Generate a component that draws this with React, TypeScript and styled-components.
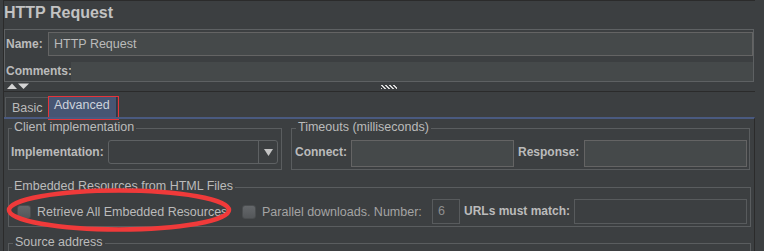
import React from 'react';
import styled, { createGlobalStyle } from 'styled-components';

const Global = createGlobalStyle`
  html, body { margin: 0; padding: 0; background: #3c3f41; }
  body {
    font-family: "Liberation Sans", Arial, sans-serif;
    font-size: 12.5px;
    color: #bbbbbb;
  }
  * { box-sizing: border-box; }
`;

const Root = styled.div`
  width: 764px;
  height: 251px;
  overflow: hidden;
  background: #3c3f41;
`;

const Frame = styled.div`
  margin-left: 3px;
  width: 752px;
  border-left: 1px solid #2b2b2b;
  border-top: 1px solid #2b2b2b;
`;

const Title = styled.div`
  height: 28px;
  line-height: 23px;
  font-size: 16px;
  font-weight: bold;
  color: #c2c2c2;
`;

const NamePanel = styled.div`
  width: 750px;
  height: 53px;
  border: 1px solid #5e6163;
  padding: 2px 0 0 1px;
  display: flex;
  flex-direction: column;
  gap: 6px;
`;

const FormRow = styled.div<{ $h: number }>`
  display: flex;
  align-items: stretch;
  height: ${(p) => p.$h}px;
`;

const Label = styled.span<{ $w: number; $ml?: number; $lh?: number }>`
  flex: none;
  width: ${(p) => p.$w}px;
  margin-left: ${(p) => p.$ml ?? 0}px;
  line-height: ${(p) => p.$lh ?? 24}px;
  font-size: 12px;
  font-weight: bold;
  color: #bbbbbb;
  white-space: nowrap;
`;

const TextField = styled.div<{ $h?: number; $disabled?: boolean }>`
  flex: 1;
  height: ${(p) => (p.$h ? `${p.$h}px` : 'auto')};
  background: ${(p) => (p.$disabled ? '#3c3f41' : '#45494a')};
  border: 1px solid ${(p) => (p.$disabled ? '#585b5d' : '#646464')};
  padding: 0 5px;
  line-height: ${(p) => (p.$h ? p.$h - 2 : 22)}px;
  color: ${(p) => (p.$disabled ? '#8e8e8e' : '#bbbbbb')};
  white-space: nowrap;
  overflow: hidden;
`;

const CommentsArea = styled.div`
  flex: 1;
  background: #45494a;
`;

const SplitBar = styled.div`
  height: 10px;
  border-bottom: 1px solid #2b2b2b;
  display: flex;
  align-items: flex-start;
  padding: 1px 0 0 3px;
`;

const Grip = styled.svg`
  margin: 2px 0 0 350px;
`;

const TabStrip = styled.div`
  height: 25px;
  display: flex;
  align-items: flex-end;
  padding-left: 1px;
`;

const Tab = styled.div<{ $active?: boolean; $w: number }>`
  position: relative;
  width: ${(p) => p.$w}px;
  height: ${(p) => (p.$active ? 21 : 20)}px;
  padding-left: ${(p) => (p.$active ? 4 : 6)}px;
  line-height: ${(p) => (p.$active ? 17 : 20)}px;
  white-space: nowrap;
  background: ${(p) => (p.$active ? '#475573' : 'transparent')};
  border-top: 1px solid ${(p) => (p.$active ? '#5a6688' : '#55585a')};
  border-left: 1px solid ${(p) => (p.$active ? '#475573' : '#55585a')};
  border-right: 1px solid ${(p) => (p.$active ? '#2f3545' : 'transparent')};
  color: ${(p) => (p.$active ? '#cdd2dc' : '#bbbbbb')};
  ${(p) =>
    p.$active &&
    `
    &::after {
      content: '';
      position: absolute;
      left: -2px;
      top: -1px;
      right: -3px;
      bottom: -3px;
      border: 1.5px solid #e5343b;
    }
  `}
`;

const TabBody = styled.div`
  position: relative;
  height: 140px;
  border-top: 2px solid #4a5a80;
  border-right: 1px solid #2b2b2b;
  padding-top: 2px;
`;

const GroupRow = styled.div`
  display: flex;
  gap: 9px;
  padding-left: 4px;
`;

const Group = styled.fieldset<{ $w: number; $mt?: number; $pl?: number; $pr?: number; $h?: number }>`
  margin: ${(p) => p.$mt ?? 0}px 0 0 0;
  width: ${(p) => p.$w}px;
  ${(p) => (p.$h ? `height: ${p.$h}px;` : '')}
  min-width: 0;
  border: 1px solid #5a5d5f;
  padding: 4px ${(p) => p.$pr ?? 2}px 2px ${(p) => p.$pl ?? 2}px;
`;

const StackGroup = styled(Group)`
  margin-left: 4px;
`;

const Legend = styled.legend<{ $ml?: number }>`
  padding: 0 2px 3px;
  margin-left: ${(p) => p.$ml ?? 1}px;
  line-height: 12px;
  font-size: 12.5px;
  color: #bbbbbb;
  white-space: nowrap;
`;

const Combo = styled.div`
  flex: 1;
  height: 24px;
  display: flex;
  border: 1px solid #5e6163;
  border-radius: 3px;
  background: #3c3f41;
`;

const ComboValue = styled.div`
  flex: 1;
`;

const ComboArrow = styled.div`
  width: 19px;
  border-left: 1px solid #5e6163;
  display: flex;
  align-items: center;
  justify-content: center;
`;

const CheckRow = styled.div`
  display: flex;
  align-items: center;
  height: 25px;
`;

const Check = styled.span<{ $ml: number }>`
  flex: none;
  width: 14px;
  height: 14px;
  margin-left: ${(p) => p.$ml}px;
  border-radius: 3px;
  border: 1px solid #4a4d4f;
  background: linear-gradient(#64676a, #54575a);
`;

const CheckText = styled.span<{ $w: number; $dim?: boolean }>`
  flex: none;
  width: ${(p) => p.$w}px;
  margin-left: 6px;
  white-space: nowrap;
  overflow: hidden;
  color: ${(p) => (p.$dim ? '#a4a4a4' : '#bbbbbb')};
`;

const NumberField = styled(TextField)`
  flex: none;
  width: 28px;
  margin-left: 6px;
`;

const Annotation = styled.svg`
  position: absolute;
  left: -3px;
  top: 69px;
  pointer-events: none;
  overflow: visible;
`;

function SplitArrows() {
  return (
    <svg width="24" height="7" viewBox="0 0 24 7">
      <polygon points="0,6 5,0.5 10,6" fill="#d4d4d4" />
      <polygon points="11,0.5 22,0.5 16.5,6" fill="#d4d4d4" />
    </svg>
  );
}

function GripDots() {
  const rects: React.ReactElement[] = [];
  for (let r = 0; r < 4; r++) {
    for (let c = 0; c < 16; c++) {
      if (((c - r) % 4 + 4) % 4 < 2) {
        rects.push(<rect key={`${r}-${c}`} x={c} y={r} width={1} height={1} fill="#d8d8d8" />);
      }
    }
  }
  return (
    <Grip width="16" height="4" viewBox="0 0 16 4">
      {rects}
    </Grip>
  );
}

export default function App() {
  return (
    <Root>
      <Global />
      <Frame>
        <Title>HTTP Request</Title>
        <NamePanel>
          <FormRow $h={24}>
            <Label $w={42}>Name:</Label>
            <TextField>HTTP Request</TextField>
          </FormRow>
          <FormRow $h={19}>
            <Label $w={65} $lh={19}>Comments:</Label>
            <CommentsArea />
          </FormRow>
        </NamePanel>
        <SplitBar>
          <SplitArrows />
          <GripDots />
        </SplitBar>
        <TabStrip>
          <Tab $w={44}>Basic</Tab>
          <Tab $w={68} $active>
            Advanced
          </Tab>
        </TabStrip>
        <TabBody>
          <GroupRow>
            <Group $w={274} $pr={3}>
              <Legend>Client implementation</Legend>
              <FormRow $h={27}>
                <Label $w={97}>Implementation:</Label>
                <Combo>
                  <ComboValue />
                  <ComboArrow>
                    <svg width="9" height="7" viewBox="0 0 9 7">
                      <polygon points="0,0 9,0 4.5,7" fill="#c4c4c4" />
                    </svg>
                  </ComboArrow>
                </Combo>
              </FormRow>
            </Group>
            <Group $w={459} $pl={3}>
              <Legend>Timeouts (milliseconds)</Legend>
              <FormRow $h={27}>
                <Label $w={56}>Connect:</Label>
                <TextField $h={27} />
                <Label $w={66} $ml={4}>Response:</Label>
                <TextField $h={27} />
              </FormRow>
            </Group>
          </GroupRow>
          <StackGroup $w={743} $mt={10} $pr={3}>
            <Legend>Embedded Resources from HTML Files</Legend>
            <CheckRow>
              <Check $ml={6} />
              <CheckText $w={199}>Retrieve All Embedded Resources</CheckText>
              <Check $ml={6} />
              <CheckText $w={164} $dim>
                Parallel downloads. Number:
              </CheckText>
              <NumberField $h={25} $disabled>
                6
              </NumberField>
              <Label $w={110} $ml={4} $lh={25}>
                URLs must match:
              </Label>
              <TextField $h={25} $disabled />
            </CheckRow>
          </StackGroup>
          <StackGroup $w={743} $mt={9} $h={40}>
            <Legend $ml={2}>Source address</Legend>
          </StackGroup>
          <Annotation width="234" height="46" viewBox="0 0 234 46">
            <ellipse cx="118" cy="22" rx="110" ry="19.5" fill="none" stroke="#f03a3a" strokeWidth="4.5" />
          </Annotation>
        </TabBody>
      </Frame>
    </Root>
  );
}
